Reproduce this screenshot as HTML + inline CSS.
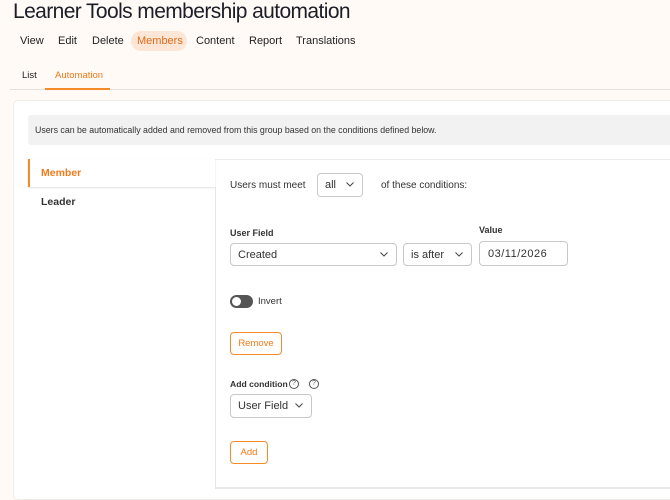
<!DOCTYPE html>
<html><head><meta charset="utf-8"><style>
*{box-sizing:border-box;margin:0;padding:0}
body{width:670px;height:490px;overflow:hidden;background:#fffaf6;font-family:"Liberation Sans",sans-serif;color:#222;position:relative}
.a{position:absolute;white-space:nowrap}
.sel{position:absolute;border:1px solid #c8c8c8;border-radius:4px;background:#fff;font-size:11px;color:#333;padding-left:7px;display:flex;align-items:center}
.sel svg{position:absolute;right:8px;top:50%;margin-top:-3px}
.btn{position:absolute;border:1.5px solid #f58a2b;border-radius:4px;background:#fff;color:#f07a1a;font-size:9.5px;display:flex;align-items:center;justify-content:center}
.help{position:absolute;width:10px;height:10px;border:1px solid #555;border-radius:50%;font-size:7px;text-align:center;line-height:8px;color:#555}
</style></head><body>
<div class="a" style="left:13px;top:0;font-size:21px;color:#1d1d28;letter-spacing:-0.6px">Learner Tools membership automation</div>
<div class="a" style="left:131px;top:31px;width:56px;height:20px;background:#fde6d6;border-radius:10px"></div>
<div class="a" style="top:35px;font-size:11px;color:#222;left:20px">View</div>
<div class="a" style="top:35px;font-size:11px;left:58px">Edit</div>
<div class="a" style="top:35px;font-size:11px;left:92px">Delete</div>
<div class="a" style="top:35px;font-size:11px;left:137px;color:#e06a1a">Members</div>
<div class="a" style="top:35px;font-size:11px;left:196px">Content</div>
<div class="a" style="top:35px;font-size:11px;left:249px">Report</div>
<div class="a" style="top:35px;font-size:11px;left:296px">Translations</div>
<div class="a" style="top:70px;font-size:9.5px;left:22px">List</div>
<div class="a" style="top:70px;font-size:9.5px;left:55px;color:#f07a1a">Automation</div>
<div class="a" style="left:10px;top:89px;width:660px;height:1px;background:#e3e0dd"></div>
<div class="a" style="left:45px;top:88px;width:65px;height:2px;background:#f58a2b"></div>
<div class="a" style="left:13px;top:100px;width:670px;height:400px;background:#fff;border:1px solid #f0ece8;border-radius:5px"></div>
<div class="a" style="left:28px;top:115px;width:660px;height:30px;background:#f2f2f2;border-radius:3px"></div>
<div class="a" style="left:35px;top:125px;font-size:8.8px;color:#333">Users can be automatically added and removed from this group based on the conditions defined below.</div>
<div class="a" style="left:28px;top:159px;width:660px;height:1px;background:#ececec"></div>
<div class="a" style="left:215px;top:187px;width:1px;height:301px;background:#e6e6e6"></div>
<div class="a" style="left:215px;top:487px;width:460px;height:2px;background:#e6e6e6"></div>
<div class="a" style="left:28px;top:159px;width:187px;height:28px;background:#fff;border-left:2px solid #f58a2b;box-shadow:0 1px 2px rgba(0,0,0,.12)"></div>
<div class="a" style="left:41px;top:167px;font-size:10.5px;font-weight:bold;color:#f07a1a">Member</div>
<div class="a" style="left:41px;top:196px;font-size:10.5px;font-weight:bold;color:#333">Leader</div>
<div class="a" style="left:230px;top:180px;font-size:10px;color:#333">Users must meet</div>
<div class="sel" style="left:317px;top:173px;width:46px;height:24px">all<svg width="8" height="5"><path d="M.5 .5L4 4 7.5.5" stroke="#444" fill="none"/></svg></div>
<div class="a" style="left:381px;top:180px;font-size:10px;color:#333">of these conditions:</div>
<div class="a" style="left:230px;top:228px;font-size:9px;font-weight:bold;color:#333">User Field</div>
<div class="a" style="left:479px;top:225px;font-size:9px;font-weight:bold;color:#333">Value</div>
<div class="sel" style="left:230px;top:243px;width:167px;height:23px">Created<svg width="8" height="5"><path d="M.5 .5L4 4 7.5.5" stroke="#444" fill="none"/></svg></div>
<div class="sel" style="left:403px;top:243px;width:69px;height:23px">is after<svg width="8" height="5"><path d="M.5 .5L4 4 7.5.5" stroke="#444" fill="none"/></svg></div>
<div class="sel" style="left:479px;top:241px;width:89px;height:25px;padding-left:8px;letter-spacing:.5px">03/11/2026</div>
<div class="a" style="left:230px;top:295px;width:23px;height:13px;border-radius:7px;background:#555"></div>
<div class="a" style="left:232px;top:297px;width:9px;height:9px;border-radius:50%;background:#fff"></div>
<div class="a" style="left:258px;top:296px;font-size:9.5px;color:#333">Invert</div>
<div class="btn" style="left:230px;top:332px;width:52px;height:23px">Remove</div>
<div class="a" style="left:230px;top:379px;font-size:8.6px;font-weight:bold;color:#333">Add condition</div>
<div class="help" style="left:289px;top:379px">?</div>
<div class="help" style="left:309px;top:379px">?</div>
<div class="sel" style="left:230px;top:394px;width:82px;height:24px">User Field<svg width="8" height="5"><path d="M.5 .5L4 4 7.5.5" stroke="#444" fill="none"/></svg></div>
<div class="btn" style="left:230px;top:441px;width:38px;height:23px">Add</div>
</body></html>
